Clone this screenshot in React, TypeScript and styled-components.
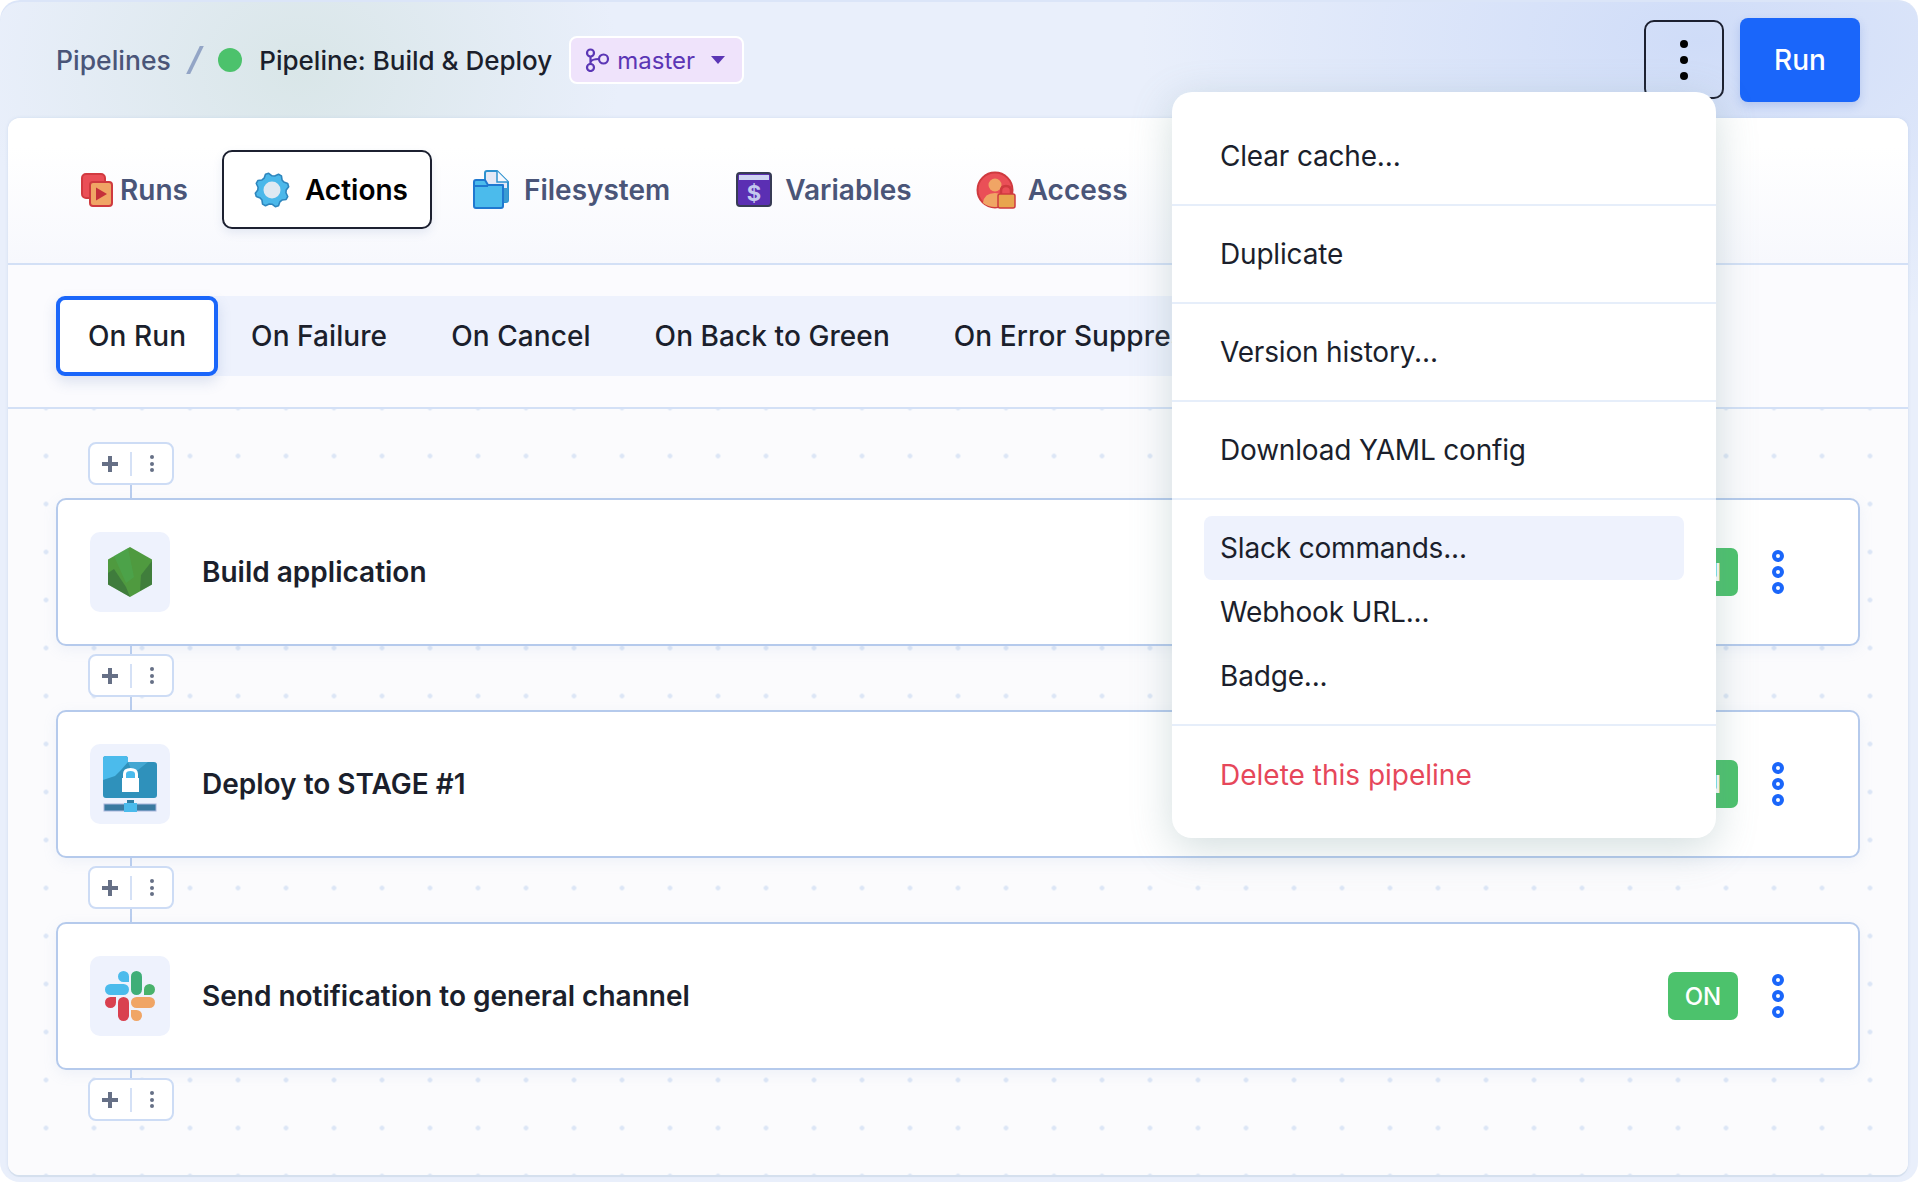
import React from 'react';
import styled, { createGlobalStyle } from 'styled-components';

const GlobalStyle = createGlobalStyle`
  html, body {
    margin: 0;
    padding: 0;
    background: #ffffff;
    font-family: Inter, "Liberation Sans", sans-serif;
  }
  * { box-sizing: border-box; }
`;

const Frame = styled.div`
  position: relative;
  width: 1918px;
  height: 1182px;
  display: flex;
  flex-direction: column;
  padding: 0 10px 7px 8px;
  border-radius: 20px;
  overflow: hidden;
  box-shadow: inset 0 2px 0 #dbe5f8;
  background:
    radial-gradient(ellipse 320px 260px at 300px 70px, #d9e6e8 0%, rgba(217, 230, 232, 0) 100%),
    radial-gradient(ellipse 560px 300px at 1700px 40px, #cfdcf8 0%, rgba(207, 220, 248, 0) 100%),
    #e9effb;
`;

const Header = styled.header`
  height: 118px;
  flex: none;
  display: flex;
  align-items: center;
  padding: 2px 48px 0 48px;
`;

const Crumb = styled.span`
  font-size: 26.5px;
  font-weight: 500;
  color: #4a5578;
`;

const Slash = styled.span`
  width: 3.5px;
  height: 28px;
  margin: 0 22px 0 22px;
  background: #93a5c6;
  transform: skewX(-26deg);
`;

const StatusDot = styled.span`
  width: 24px;
  height: 24px;
  border-radius: 50%;
  background: #4cc26c;
  margin-right: 17px;
`;

const PipelineName = styled.span`
  font-size: 26px;
  font-weight: 500;
  color: #1b1f2c;
`;

const BranchChip = styled.button`
  width: 175px;
  height: 48px;
  margin-left: 17px;
  display: flex;
  align-items: center;
  padding: 0 0 0 14px;
  border: 2px solid #ffffff;
  border-radius: 8px;
  background: #efe3fb;
  color: #5b36b5;
  font-family: inherit;
  font-size: 24px;
`;

const BranchName = styled.span`
  margin-left: 7px;
`;

const Caret = styled.span`
  width: 0;
  height: 0;
  margin-left: 16px;
  border-left: 7px solid transparent;
  border-right: 7px solid transparent;
  border-top: 8px solid #5b36b5;
`;

const HeaderActions = styled.div`
  margin-left: auto;
  display: flex;
  align-items: center;
  gap: 16px;
`;

const MoreButton = styled.button`
  width: 80px;
  height: 79px;
  margin-bottom: 1px;
  display: flex;
  flex-direction: column;
  align-items: center;
  justify-content: center;
  gap: 8px;
  border: 2px solid #1c2030;
  border-radius: 10px;
  background: transparent;
`;

const MoreDot = styled.span`
  width: 8px;
  height: 8px;
  border-radius: 50%;
  background: #000000;
`;

const RunButton = styled.button`
  width: 120px;
  height: 84px;
  border: none;
  border-radius: 8px;
  background: #1a66fa;
  color: #ffffff;
  font-family: inherit;
  font-size: 28px;
  font-weight: 500;
  box-shadow: 0 4px 10px rgba(26, 80, 200, 0.18);
`;

const Panel = styled.main`
  flex: 1;
  display: flex;
  flex-direction: column;
  border-radius: 12px;
  overflow: hidden;
  background: #fbfbfe;
  box-shadow: 0 2px 0 #d5e0ee, 0 0 3px rgba(180, 200, 230, 0.5);
`;

const TabRow = styled.nav`
  flex: none;
  display: flex;
  align-items: center;
  gap: 9px;
  padding: 32px 0 34px 41px;
  border-bottom: 2px solid #d3e0f6;
  background: linear-gradient(#ffffff 20%, #f7f8fd 100%);
`;

const Tab = styled.div<{ $active?: boolean; $gap?: number; $end?: number }>`
  height: 79px;
  display: flex;
  align-items: center;
  gap: ${p => p.$gap ?? 15}px;
  padding: 0 ${p => p.$end ?? 23}px 0 30px;
  border: 2px solid ${p => (p.$active ? '#1c2030' : 'transparent')};
  border-radius: 10px;
  background: ${p => (p.$active ? '#ffffff' : 'transparent')};
  box-shadow: ${p => (p.$active ? '0 4px 10px rgba(100, 130, 180, 0.14)' : 'none')};
  color: ${p => (p.$active ? '#000000' : '#4a5578')};
  font-size: 28px;
  font-weight: 600;
`;

const SubTabRow = styled.div`
  flex: none;
  display: flex;
  padding: 31px 0 31px 48px;
  border-bottom: 2px solid #d3e0f6;
`;

const SubTabStrip = styled.div`
  display: flex;
  background: #eef2fd;
  border-radius: 8px;
`;

const SubTab = styled.div<{ $active?: boolean }>`
  height: 80px;
  display: flex;
  align-items: center;
  padding: 0 ${p => (p.$active ? 28 : 33)}px;
  margin-right: ${p => (p.$active ? 0 : -2)}px;
  border: ${p => (p.$active ? '4px solid #1a66fa' : 'none')};
  border-radius: 9px;
  background: ${p => (p.$active ? '#ffffff' : 'transparent')};
  box-shadow: ${p => (p.$active ? '0 6px 14px rgba(80, 110, 170, 0.18)' : 'none')};
  color: #1b1f2c;
  font-size: 28px;
  font-weight: 500;
  letter-spacing: 0.08px;
  white-space: nowrap;
`;

const Canvas = styled.section`
  flex: 1;
  display: flex;
  flex-direction: column;
  padding: 33px 48px 0;
  background-color: #fbfbfd;
  background-image: radial-gradient(circle at 2.5px 2.5px, #dce6f6 2px, rgba(220, 230, 246, 0) 2.6px);
  background-size: 48px 48px;
  background-position: 35.5px 44.5px;
`;

const AddBox = styled.div`
  width: 86px;
  height: 43px;
  margin-left: 32px;
  display: flex;
  align-items: center;
  border: 2px solid #cddcf5;
  border-radius: 8px;
  background: #ffffff;
`;

const AddPlus = styled.span`
  width: 16px;
  height: 16px;
  margin-left: 12px;
  background:
    linear-gradient(#667086, #667086) center / 4px 16px no-repeat,
    linear-gradient(#667086, #667086) center / 16px 4px no-repeat;
`;

const AddDivider = styled.span`
  width: 2px;
  height: 24px;
  margin-left: 12px;
  background: #d5e1f6;
`;

const AddMore = styled.span`
  display: flex;
  flex-direction: column;
  gap: 2.5px;
  margin-left: 18px;
`;

const AddMoreDot = styled.span`
  width: 4px;
  height: 4px;
  border-radius: 50%;
  background: #667086;
`;

const Connector = styled.div<{ $height: number }>`
  width: 2px;
  height: ${p => p.$height}px;
  margin-left: 74px;
  background: #b9cdee;
`;

const ActionCard = styled.article`
  height: 148px;
  flex: none;
  display: flex;
  align-items: center;
  padding: 0 74px 0 32px;
  border: 2px solid #b5caec;
  border-radius: 10px;
  background: #ffffff;
  box-shadow: 0 4px 14px rgba(150, 170, 210, 0.12);
`;

const IconTile = styled.div`
  width: 80px;
  height: 80px;
  flex: none;
  display: flex;
  align-items: center;
  justify-content: center;
  border-radius: 10px;
  background: #eef2fd;
`;

const ActionTitle = styled.h3`
  margin: 0 0 0 32px;
  font-size: 28px;
  font-weight: 600;
  color: #1b1f2c;
`;

const OnBadge = styled.span`
  width: 70px;
  height: 48px;
  margin-left: auto;
  display: flex;
  align-items: center;
  justify-content: center;
  border-radius: 7px;
  background: #4cc26c;
  color: #ffffff;
  font-size: 24px;
  font-weight: 500;
`;

const RingDots = styled.div`
  display: flex;
  flex-direction: column;
  gap: 4px;
  margin-left: 34px;
`;

const RingDot = styled.span`
  width: 12px;
  height: 12px;
  border-radius: 50%;
  border: 4.5px solid #1a66fa;
  background: #ffffff;
`;

const Menu = styled.div`
  position: absolute;
  top: 92px;
  left: 1172px;
  width: 544px;
  height: 746px;
  padding: 16px 0 13px;
  border-radius: 20px;
  background: #ffffff;
  box-shadow: 0 10px 40px rgba(110, 145, 150, 0.3);
  color: #1b1f2c;
  font-size: 28px;
  letter-spacing: -0.18px;
`;

const MenuRow = styled.div<{ $danger?: boolean }>`
  height: 98px;
  display: flex;
  align-items: center;
  padding: 0 48px;
  border-bottom: 2px solid #e6eefa;
  color: ${p => (p.$danger ? '#e6475a' : 'inherit')};
  letter-spacing: ${p => (p.$danger ? '0' : 'inherit')};

  &:last-child {
    border-bottom: none;
  }
`;

const MenuGroup = styled.div`
  height: 226px;
  padding: 16px 32px;
  border-bottom: 2px solid #e6eefa;
`;

const MenuGroupItem = styled.div<{ $highlight?: boolean }>`
  height: 64px;
  display: flex;
  align-items: center;
  padding: 0 16px;
  border-radius: 8px;
  background: ${p => (p.$highlight ? '#eef2fd' : 'transparent')};
`;

// eight rounded lobes around the centre, for the Actions tab icon
const gearPath = (() => {
  const points: string[] = [];
  const lobes = 8;
  for (let i = 0; i < lobes * 4; i++) {
    const angle = (i / (lobes * 4)) * Math.PI * 2 + Math.PI / 8;
    const radius = i % 4 === 0 || i % 4 === 1 ? 17 : 14.2;
    points.push(`${(18 + radius * Math.cos(angle)).toFixed(2)} ${(18 + radius * Math.sin(angle)).toFixed(2)}`);
  }
  return `M${points.join(' L')} Z`;
})();

const RunsIcon = () => (
  <svg width="32" height="34" viewBox="0 0 32 34">
    <rect x="1" y="1" width="23" height="24" rx="4" fill="#ea4f57" stroke="#d23a40" strokeWidth="2" />
    <rect x="9" y="9" width="22" height="24" rx="3" fill="#f0a565" stroke="#cf3a3f" strokeWidth="2" />
    <path d="M15 14.5 L26 21 L15 27.5 Z" fill="#c5303a" />
  </svg>
);

const ActionsIcon = () => (
  <svg width="36" height="36" viewBox="0 0 36 36">
    <path d={gearPath} fill="#4bb8ea" stroke="#2e86bd" strokeWidth="1.6" strokeLinejoin="round" />
    <circle cx="18" cy="18" r="8.5" fill="#dfe9f2" />
  </svg>
);

const FilesystemIcon = () => (
  <svg width="36" height="39" viewBox="0 0 36 39">
    <path d="M12 3 Q12 1 14 1 L24 1 L35 12 L35 30 Q35 32 33 32 L14 32 Q12 32 12 30 Z" fill="#e4e9f6" stroke="#2e92cf" strokeWidth="2" />
    <path d="M24 1 L24 12 L35 12" fill="#f6f8fd" stroke="#2e92cf" strokeWidth="1.5" />
    <path d="M30 18 L35 18 L35 30 Q35 32 33 32 L30 32 Z" fill="#3a9cd2" />
    <path d="M1 12 Q1 10 3 10 L12 10 L15 15 L30 15 L30 36 Q30 38 28 38 L3 38 Q1 38 1 36 Z" fill="#4bbbec" stroke="#1f78d0" strokeWidth="2" strokeLinejoin="round" />
    <path d="M1 16 L15 16" stroke="#1f78d0" strokeWidth="2" />
  </svg>
);

const VariablesIcon = () => (
  <svg width="36" height="35" viewBox="0 0 36 35">
    <rect x="1" y="1" width="34" height="33" rx="3" fill="#5b2fb3" stroke="#373b55" strokeWidth="2" />
    <rect x="3" y="3" width="30" height="5" fill="#cfd3f2" />
    <text x="18" y="29" textAnchor="middle" fontFamily="Inter, sans-serif" fontSize="22" fontWeight="700" fill="#c3c9ee">$</text>
  </svg>
);

const AccessIcon = () => (
  <svg width="40" height="38" viewBox="0 0 40 38">
    <circle cx="19" cy="19" r="17.5" fill="#ea4f57" stroke="#cf3a3f" strokeWidth="2" />
    <circle cx="19" cy="14" r="6.5" fill="#f0a565" />
    <path d="M7 32 Q8 22 19 22 Q30 22 31 32 Q25 36 19 36 Q12 36 7 32 Z" fill="#f0a565" />
    <path d="M25 24 L25 20 Q25 15 30 15 Q35 15 35 20 L35 24" fill="none" stroke="#cf3a3f" strokeWidth="2.5" />
    <rect x="22" y="23" width="17" height="14" rx="2" fill="#e8a54e" stroke="#cf3a3f" strokeWidth="1.5" />
  </svg>
);

const BranchIcon = () => (
  <svg width="25" height="24" viewBox="0 0 25 24" fill="none" stroke="#5b36b5" strokeWidth="2.2">
    <circle cx="5.5" cy="5" r="3.5" />
    <circle cx="5.5" cy="19.5" r="3.5" />
    <circle cx="18.5" cy="11" r="4.5" />
    <path d="M5.5 8.5 L5.5 16 M5.5 14 Q7 11 14 11" />
  </svg>
);

const HexIcon = () => (
  <svg width="44" height="50" viewBox="0 0 44 50">
    <path d="M22 0 L44 12.5 L44 37.5 L22 50 L0 37.5 L0 12.5 Z" fill="#4f9a3f" />
    <path d="M6 9 L20 1 L26 30 L18 36 Z" fill="#49ad57" opacity="0.45" />
    <path d="M0 26 L6 22 L18 40 L22 50 L0 37.5 Z" fill="#2f5d3a" opacity="0.5" />
    <path d="M44 14 L44 37.5 L32 44 L33 28 Z" fill="#2f5d3a" opacity="0.45" />
  </svg>
);

const FolderLockIcon = () => (
  <svg width="54" height="56" viewBox="0 0 54 56">
    <path d="M0 3 Q0 0 3 0 L22 0 Q25 0 25 3 L25 6 L51 6 Q54 6 54 9 L54 39 Q54 42 51 42 L3 42 Q0 42 0 39 Z" fill="#2f91bb" />
    <path d="M0 3 Q0 0 3 0 L22 0 Q25 0 25 3 L25 6 L18 14 L12 20 L0 24 Z" fill="#4bbbec" />
    <path d="M25 6 L45 6 L30 18 Z" fill="#4bb0dc" opacity="0.7" />
    <path d="M21.5 22 L21.5 18 Q21.5 13.5 27.5 13.5 Q33.5 13.5 33.5 18 L33.5 22" fill="#4bbbec" stroke="#ffffff" strokeWidth="3" />
    <rect x="19" y="22" width="17" height="14" fill="#ffffff" />
    <rect x="24" y="44" width="7" height="4" fill="#2f7fa5" />
    <rect x="1" y="48" width="52" height="7" fill="#3a7aa0" stroke="#a7b5dc" strokeWidth="1" />
    <rect x="21" y="47" width="13" height="9" fill="#4bbbec" />
  </svg>
);

const SlackIcon = () => (
  <svg width="80" height="80" viewBox="0 0 80 80">
    <path d="M28 20.5 A5.5 5.5 0 0 1 39 20.5 L39 26 L33.5 26 A5.5 5.5 0 0 1 28 20.5 Z" fill="#4bbbec" />
    <rect x="15" y="28" width="24" height="11" rx="5.5" fill="#4bbbec" />
    <rect x="41" y="15" width="11" height="24" rx="5.5" fill="#3fae78" />
    <path d="M54 33.5 A5.5 5.5 0 0 1 65 33.5 A5.5 5.5 0 0 1 59.5 39 L54 39 Z" fill="#49b26c" />
    <path d="M15 46.5 A5.5 5.5 0 0 1 20.5 41 L26 41 L26 46.5 A5.5 5.5 0 0 1 15 46.5 Z" fill="#d9404f" />
    <rect x="28" y="41" width="11" height="24" rx="5.5" fill="#d9404f" />
    <rect x="41" y="41" width="24" height="11" rx="5.5" fill="#f0a565" />
    <path d="M41 54 L46.5 54 A5.5 5.5 0 0 1 46.5 65 A5.5 5.5 0 0 1 41 59.5 Z" fill="#f0a565" />
  </svg>
);

const AddRow = () => (
  <AddBox>
    <AddPlus />
    <AddDivider />
    <AddMore>
      <AddMoreDot />
      <AddMoreDot />
      <AddMoreDot />
    </AddMore>
  </AddBox>
);

const actions = [
  { title: 'Build application', icon: <HexIcon /> },
  { title: 'Deploy to STAGE #1', icon: <FolderLockIcon /> },
  { title: 'Send notification to general channel', icon: <SlackIcon /> },
];

const App: React.FC = () => {
  return (
    <>
      <GlobalStyle />
      <Frame>
        <Header>
          <Crumb>Pipelines</Crumb>
          <Slash />
          <StatusDot />
          <PipelineName>Pipeline: Build &amp; Deploy</PipelineName>
          <BranchChip>
            <BranchIcon />
            <BranchName>master</BranchName>
            <Caret />
          </BranchChip>
          <HeaderActions>
            <MoreButton>
              <MoreDot />
              <MoreDot />
              <MoreDot />
            </MoreButton>
            <RunButton>Run</RunButton>
          </HeaderActions>
        </Header>

        <Panel>
          <TabRow>
            <Tab $gap={7}><RunsIcon />Runs</Tab>
            <Tab $active $end={22}><ActionsIcon />Actions</Tab>
            <Tab><FilesystemIcon />Filesystem</Tab>
            <Tab $gap={13} $end={21}><VariablesIcon />Variables</Tab>
            <Tab $gap={12}><AccessIcon />Access</Tab>
          </TabRow>

          <SubTabRow>
            <SubTabStrip>
              <SubTab $active>On Run</SubTab>
              <SubTab>On Failure</SubTab>
              <SubTab>On Cancel</SubTab>
              <SubTab>On Back to Green</SubTab>
              <SubTab>On Error Suppressed</SubTab>
            </SubTabStrip>
          </SubTabRow>

          <Canvas>
            <AddRow />
            {actions.map(action => (
              <React.Fragment key={action.title}>
                <Connector $height={13} />
                <ActionCard>
                  <IconTile>{action.icon}</IconTile>
                  <ActionTitle>{action.title}</ActionTitle>
                  <OnBadge>ON</OnBadge>
                  <RingDots>
                    <RingDot />
                    <RingDot />
                    <RingDot />
                  </RingDots>
                </ActionCard>
                <Connector $height={8} />
                <AddRow />
              </React.Fragment>
            ))}
          </Canvas>
        </Panel>

        <Menu>
          <MenuRow>Clear cache...</MenuRow>
          <MenuRow>Duplicate</MenuRow>
          <MenuRow>Version history...</MenuRow>
          <MenuRow>Download YAML config</MenuRow>
          <MenuGroup>
            <MenuGroupItem $highlight>Slack commands...</MenuGroupItem>
            <MenuGroupItem>Webhook URL...</MenuGroupItem>
            <MenuGroupItem>Badge...</MenuGroupItem>
          </MenuGroup>
          <MenuRow $danger>Delete this pipeline</MenuRow>
        </Menu>
      </Frame>
    </>
  );
};

export default App;
